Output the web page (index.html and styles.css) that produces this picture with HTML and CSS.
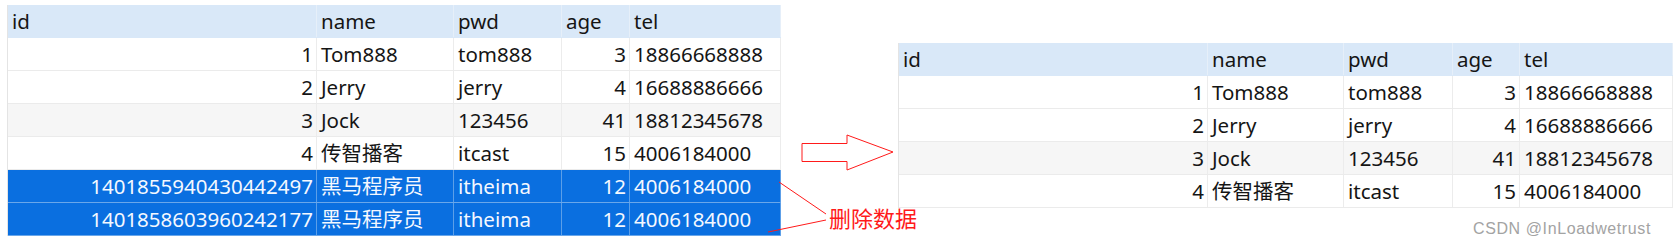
FILE: index.html
```html
<!DOCTYPE html>
<html lang="zh-CN">
<head>
<meta charset="utf-8">
<title>删除数据</title>
<link rel="stylesheet" href="styles.css">
</head>
<body>
<div class="page">
  <div class="grid before">
    <div class="row head"><div class="c">id</div><div class="c">name</div><div class="c">pwd</div><div class="c">age</div><div class="c">tel</div></div>
    <div class="row"><div class="c r">1</div><div class="c">Tom888</div><div class="c">tom888</div><div class="c r">3</div><div class="c">18866668888</div></div>
    <div class="row"><div class="c r">2</div><div class="c">Jerry</div><div class="c">jerry</div><div class="c r">4</div><div class="c">16688886666</div></div>
    <div class="row alt"><div class="c r">3</div><div class="c">Jock</div><div class="c">123456</div><div class="c r">41</div><div class="c">18812345678</div></div>
    <div class="row"><div class="c r">4</div><div class="c">传智播客</div><div class="c">itcast</div><div class="c r">15</div><div class="c">4006184000</div></div>
    <div class="row sel"><div class="c r">1401855940430442497</div><div class="c">黑马程序员</div><div class="c">itheima</div><div class="c r">12</div><div class="c">4006184000</div></div>
    <div class="row sel"><div class="c r">1401858603960242177</div><div class="c">黑马程序员</div><div class="c">itheima</div><div class="c r">12</div><div class="c">4006184000</div></div>
  </div>
  <div class="grid after">
    <div class="row head"><div class="c">id</div><div class="c">name</div><div class="c">pwd</div><div class="c">age</div><div class="c">tel</div></div>
    <div class="row"><div class="c r">1</div><div class="c">Tom888</div><div class="c">tom888</div><div class="c r">3</div><div class="c">18866668888</div></div>
    <div class="row"><div class="c r">2</div><div class="c">Jerry</div><div class="c">jerry</div><div class="c r">4</div><div class="c">16688886666</div></div>
    <div class="row alt"><div class="c r">3</div><div class="c">Jock</div><div class="c">123456</div><div class="c r">41</div><div class="c">18812345678</div></div>
    <div class="row"><div class="c r">4</div><div class="c">传智播客</div><div class="c">itcast</div><div class="c r">15</div><div class="c">4006184000</div></div>
  </div>
</div>
<svg class="marks" width="1674" height="245" viewBox="0 0 1674 245">
  <polygon points="802,143.5 847,143.5 847,135 893,152 847,170 847,161.5 802,161.5" fill="none" stroke="#ff1a1a" stroke-width="1"/>
  <line x1="779" y1="182" x2="826" y2="214" stroke="#ff1a1a" stroke-width="1"/>
  <line x1="768" y1="232" x2="826" y2="220" stroke="#ff1a1a" stroke-width="1"/>
</svg>
<span class="note">删除数据</span>
<span class="wm">CSDN @InLoadwetrust</span>
</body>
</html>
```
FILE: styles.css
```css
html, body {
  margin: 0;
  padding: 0;
  background: #ffffff;
}
body {
  width: 1674px;
  height: 245px;
  overflow: hidden;
  position: relative;
  font-family: "Noto Sans", "Noto Sans CJK SC", sans-serif;
}
.page {
  display: flex;
  align-items: flex-start;
  gap: 117px;
  padding-left: 7px;
}
.grid {
  display: flex;
  flex-direction: column;
  border-left: 1px solid #e4e4e4;
}
.before { margin-top: 5px; width: 773px; }
.after { margin-top: 43px; width: 774px; }
.row {
  display: grid;
  grid-template-columns: 309px 137px 108px 68px 1fr;
  height: 33px;
  box-sizing: border-box;
  border-bottom: 1px solid #ebebeb;
  color: #151515;
  background: #ffffff;
}
.after .row { grid-template-columns: 309px 136px 109px 67px 1fr; }
.row.alt { background: #f6f6f6; }
.row.head { background: #d9e8f8; border-bottom-color: #d9e8f8; }
.c {
  font-size: 20.5px;
  line-height: 32px;
  padding: 0 4px;
  white-space: nowrap;
  overflow: hidden;
  border-right: 1px solid #ececec;
}
.c.r { text-align: right; padding-right: 3px; }
.head .c { border-right-color: #e6eff9; }
.row.sel {
  background: #0a6fe0;
  color: #f4f8ff;
  border-bottom-color: #6aa7ea;
}
.sel .c { border-right-color: #5c9fe8; }
.marks {
  position: absolute;
  left: 0;
  top: 0;
  pointer-events: none;
}
.note {
  position: absolute;
  left: 829px;
  top: 202px;
  font-family: "Noto Sans CJK SC", sans-serif;
  font-size: 22px;
  line-height: 30px;
  color: #ff1a1a;
}
.wm {
  position: absolute;
  left: 1473px;
  top: 218px;
  font-family: "Liberation Sans", sans-serif;
  font-size: 16px;
  letter-spacing: 0.6px;
  line-height: 22px;
  color: #a3a3a3;
}
```
